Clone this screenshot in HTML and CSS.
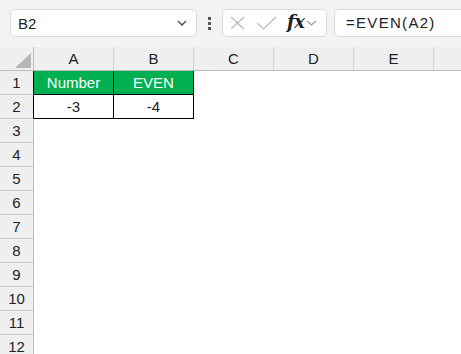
FILE: index.html
```html
<!DOCTYPE html>
<html lang="en">
<head>
    <meta charset="UTF-8">
    <title>EVEN</title>
    <link rel="stylesheet" href="styles.css">
</head>
<body>
    <div class="toolbar">
        <div class="namebox">
            <span>B2</span>
            <svg class="chev" width="10" height="6" viewBox="0 0 10 6"><path d="M1 1 L5 5 L9 1" fill="none" stroke="#444" stroke-width="1.3"/></svg>
        </div>
        <div class="kebab"><i></i><i></i><i></i></div>
        <div class="fnbox">
            <svg width="15" height="14" viewBox="0 0 15 14"><path d="M1 1 L14 13 M14 1 L1 13" stroke="#b8b8b8" stroke-width="1.2"/></svg>
            <svg class="check" width="21" height="14" viewBox="0 0 21 14"><path d="M1 7 L7.5 13 L20 1" fill="none" stroke="#b8b8b8" stroke-width="1.2"/></svg>
            <span class="fx">fx</span>
            <svg width="11" height="6" viewBox="0 0 11 6"><path d="M1 1 L5.5 5 L10 1" fill="none" stroke="#999" stroke-width="1.1"/></svg>
        </div>
        <div class="formula">=EVEN(A2)</div>
    </div>

    <div class="sheet">
        <div class="corner"><span class="tri"></span></div>
        <div class="colhead">A</div>
        <div class="colhead">B</div>
        <div class="colhead">C</div>
        <div class="colhead">D</div>
        <div class="colhead">E</div>
        <div class="colhead last"></div>

        <div class="rowhead dark">1</div>
        <div class="cell head">Number</div>
        <div class="cell head">EVEN</div>
        <div class="cell"></div><div class="cell"></div><div class="cell"></div><div class="cell"></div>

        <div class="rowhead dark">2</div>
        <div class="cell data">-3</div>
        <div class="cell data">-4</div>
        <div class="cell"></div><div class="cell"></div><div class="cell"></div><div class="cell"></div>

        <div class="rowhead">3</div><div class="blank"></div>
        <div class="rowhead">4</div><div class="blank"></div>
        <div class="rowhead">5</div><div class="blank"></div>
        <div class="rowhead">6</div><div class="blank"></div>
        <div class="rowhead">7</div><div class="blank"></div>
        <div class="rowhead">8</div><div class="blank"></div>
        <div class="rowhead">9</div><div class="blank"></div>
        <div class="rowhead">10</div><div class="blank"></div>
        <div class="rowhead">11</div><div class="blank"></div>
        <div class="rowhead">12</div><div class="blank"></div>
    </div>
</body>
</html>
```

FILE: styles.css
```css
body {
    margin: 0;
    background-color: #ffffff;
    font-family: "Liberation Sans", Arial, sans-serif;
    color: #222;
    overflow: hidden;
    width: 461px;
    height: 354px;
}

.toolbar {
    display: flex;
    align-items: center;
    height: 47px;
    padding: 0 0 1px 10px;
    background-color: #f3f3f3;
    box-sizing: border-box;
}

.namebox {
    display: flex;
    align-items: center;
    justify-content: space-between;
    width: 187px;
    height: 28px;
    box-sizing: border-box;
    padding: 0 9px 0 7px;
    background-color: #fff;
    border: 1px solid #dadada;
    border-radius: 5px;
    font-size: 15px;
}

.kebab {
    display: flex;
    flex-direction: column;
    gap: 2px;
    margin: 0 11px 0 11px;
}

.kebab i {
    display: block;
    width: 3px;
    height: 3px;
    background-color: #555;
}

.fnbox {
    display: flex;
    align-items: center;
    width: 105px;
    height: 28px;
    box-sizing: border-box;
    padding: 0 3px 0 7px;
    background-color: #fff;
    border: 1px solid #dadada;
    border-radius: 5px;
}

.fnbox .check {
    margin-left: 11px;
}

.fx {
    font-family: "DejaVu Serif", "Liberation Serif", serif;
    font-style: italic;
    font-weight: bold;
    font-size: 18px;
    line-height: 20px;
    color: #222;
    margin: 0 2px 2px 10px;
    letter-spacing: -0.5px;
}

.formula {
    flex: 1;
    height: 28px;
    margin-left: 7px;
    margin-right: -10px;
    box-sizing: border-box;
    padding: 0 0 0 11px;
    line-height: 26px;
    background-color: #fff;
    border: 1px solid #dadada;
    border-radius: 5px;
    font-size: 15px;
    letter-spacing: 1.3px;
    color: #222;
}

.sheet {
    display: grid;
    grid-template-columns: 34px repeat(5, 80px) 27px;
    grid-template-rows: 24px repeat(12, 24px);
    font-size: 15px;
}

.corner {
    position: relative;
    background-color: #efefef;
    border-right: 1px solid #bdbdbd;
    border-bottom: 1px solid #bdbdbd;
}

.tri {
    position: absolute;
    right: 2px;
    bottom: 2px;
    width: 0;
    height: 0;
    border-left: 16px solid transparent;
    border-bottom: 15px solid #b6b6b6;
}

.colhead {
    display: flex;
    align-items: center;
    justify-content: center;
    background-color: #efefef;
    border-right: 1px solid #d2d2d2;
    border-bottom: 1px solid #bdbdbd;
    color: #222;
}

.colhead.last {
    border-right: none;
}

.rowhead {
    display: flex;
    align-items: center;
    justify-content: center;
    background-color: #efefef;
    border-right: 1px solid #bdbdbd;
    border-bottom: 1px solid #c8c8c8;
    color: #222;
}

.rowhead.dark {
    border-right-color: #000;
}

.cell {
    display: flex;
    align-items: center;
    justify-content: center;
    background-color: #fff;
}

.cell.head {
    background-color: #00b050;
    color: #fff;
    border-right: 1px solid #000;
    border-bottom: 1px solid #000;
}

.cell.data {
    border-right: 1px solid #000;
    border-bottom: 1px solid #000;
}

.blank {
    grid-column: span 6;
    background-color: #fff;
}
```
